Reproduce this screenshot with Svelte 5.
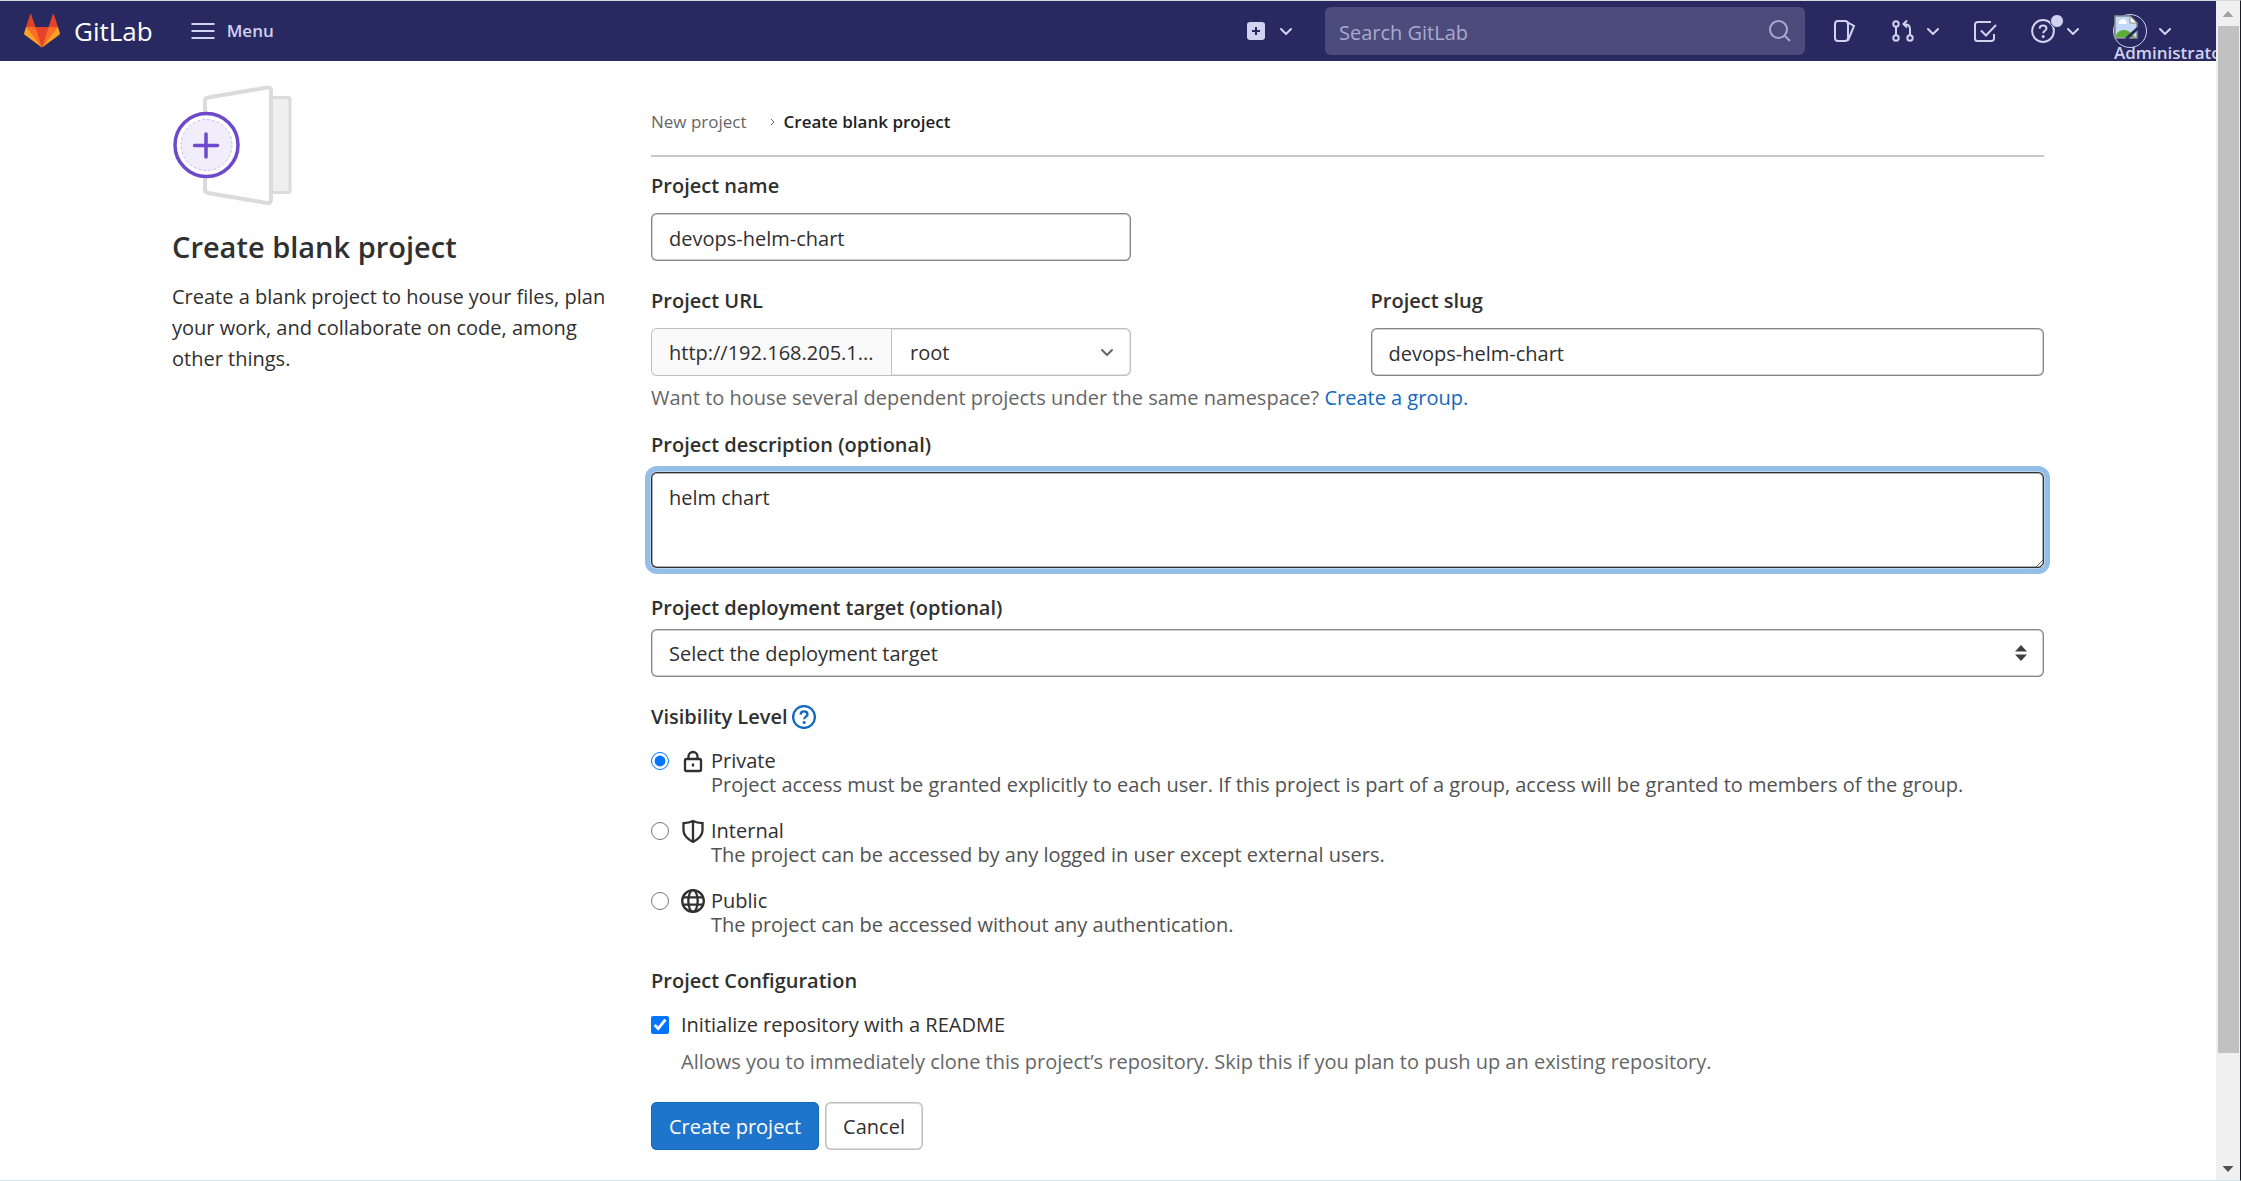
<script>
  let projectName = 'devops-helm-chart';
  let slug = 'devops-helm-chart';
  let namespace = 'root';
  let description = 'helm chart';
  let target = '';
  let visibility = 'private';
  let readme = true;

  const levels = [
    {
      id: 'private',
      title: 'Private',
      text: 'Project access must be granted explicitly to each user. If this project is part of a group, access will be granted to members of the group.'
    },
    {
      id: 'internal',
      title: 'Internal',
      text: 'The project can be accessed by any logged in user except external users.'
    },
    {
      id: 'public',
      title: 'Public',
      text: 'The project can be accessed without any authentication.'
    }
  ];
</script>

{#snippet chevron()}
  <svg class="chevron" viewBox="0 0 12 12" aria-hidden="true">
    <path d="M1 4l5 5 5-5" />
  </svg>
{/snippet}

{#snippet question()}
  <svg class="icon" viewBox="0 0 24 24" aria-hidden="true">
    <circle cx="12" cy="12" r="10.9" />
    <path d="M8.6 9.6c.1-2 1.5-3.2 3.4-3.2s3.5 1.2 3.5 3c0 2.3-3.3 2.3-3.3 4.8" />
    <circle class="solid" cx="12.2" cy="17.5" r="1.5" />
  </svg>
{/snippet}

<div class="window">
  <div class="page">
    <header class="navbar">
      <a class="brand" href="#home">
        <svg class="tanuki" viewBox="0 0 36 36" aria-hidden="true">
          <path fill="#e24329" d="M2 14l9.38 9v-9l-4-12.28c-.205-.632-1.176-.632-1.38 0z" />
          <path fill="#e24329" d="M34 14l-9.38 9v-9l4-12.28c.205-.632 1.176-.632 1.38 0z" />
          <path fill="#e24329" d="M18 34.38L3 14h30z" />
          <path fill="#fc6d26" d="M18 34.38L11.38 14H2l4 11z" />
          <path fill="#fc6d26" d="M18 34.38L24.62 14H34l-4 11z" />
          <path fill="#fca326" d="M2 14L.1 20.16c-.18.565 0 1.2.5 1.56l17.42 12.66z" />
          <path fill="#fca326" d="M34 14l1.9 6.16c.18.565 0 1.2-.5 1.56L18 34.38z" />
        </svg>
        <span>GitLab</span>
      </a>

      <button class="nav-button menu" type="button">
        <svg class="icon" viewBox="0 0 24 24" aria-hidden="true">
          <path d="M0.5 5h23M0.5 12h23M0.5 19h23" />
        </svg>
        Menu
      </button>

      <button class="nav-button create" type="button" aria-label="Create new">
        <svg class="icon" viewBox="0 0 24 24" aria-hidden="true">
          <rect class="solid" x="3" y="3" width="18" height="18" rx="3" />
          <path class="cut" d="M12 8v8M8 12h8" />
        </svg>
        {@render chevron()}
      </button>

      <form class="search">
        <input type="search" placeholder="Search GitLab" aria-label="Search GitLab" />
        <svg class="icon" viewBox="0 0 24 24" aria-hidden="true">
          <circle cx="10.5" cy="10.5" r="8.5" />
          <path d="M16.5 16.5L22 22" />
        </svg>
      </form>

      <nav class="shortcuts">
        <button class="nav-button" type="button" aria-label="Issues">
          <svg class="icon" viewBox="0 0 24 24" aria-hidden="true">
            <rect x="2" y="2" width="13" height="20" rx="3" />
            <path d="M14 3l7 4-6 14.5" />
          </svg>
        </button>
        <button class="nav-button" type="button" aria-label="Merge requests">
          <svg class="icon" viewBox="0 0 24 24" aria-hidden="true">
            <circle cx="5" cy="5" r="2.7" />
            <circle cx="5" cy="19" r="2.7" />
            <circle cx="19" cy="19" r="2.7" />
            <path d="M5 8v8M19 16v-6c0-3-1.5-5-6-5M16 1.5L12.5 5l3.5 3.5" />
          </svg>
          {@render chevron()}
        </button>
        <button class="nav-button" type="button" aria-label="To-Do List">
          <svg class="icon" viewBox="0 0 24 24" aria-hidden="true">
            <path d="M18 3H4.5A2.5 2.5 0 0 0 2 5.5v14A2.5 2.5 0 0 0 4.5 22h14a2.5 2.5 0 0 0 2.5-2.5V15" />
            <path d="M8 11.5l5 5L23 6" />
          </svg>
        </button>
        <button class="nav-button help" type="button" aria-label="Help">
          {@render question()}
          <span class="dot"></span>
          {@render chevron()}
        </button>
        <button class="nav-button" type="button" aria-label="Administrator">
          <span class="avatar">
            <svg viewBox="0 0 24 24" aria-hidden="true">
              <path fill="#c3d8f5" stroke="#8a8a8a" stroke-width="1.5" d="M1 1h15l7 7v15H1z" />
              <path fill="#fff" d="M5 9a2.5 2.5 0 0 1 2-4 3 3 0 0 1 5 1 1.8 1.8 0 0 1 0 3z" />
              <path fill="#5aac34" d="M2 20c3-6 11-7 16-1l3 3H2z" />
              <path stroke="#292961" stroke-width="3" d="M12 24L24 13" />
              <path fill="#fff" stroke="#8a8a8a" d="M16 1v7h7z" />
            </svg>
            <span class="avatar-alt">Administrator</span>
          </span>
          {@render chevron()}
        </button>
      </nav>
    </header>

    <div class="container">
      <aside>
        <svg class="door" viewBox="0 0 120 120" aria-hidden="true">
          <rect x="92" y="12.5" width="26" height="95" rx="2" fill="#efefef" stroke="#dbdbdb" stroke-width="3" />
          <path fill="#fff" stroke="#dbdbdb" stroke-width="4" d="M33 16q0-3 3-3.5l59-10q4-.5 4 3v109q0 4-4 3.5l-59-10q-3-.5-3-3.5z" />
          <circle cx="34.5" cy="60" r="31.5" fill="#fff" stroke="#6e49cb" stroke-width="3.5" />
          <circle cx="34.5" cy="60" r="25.5" fill="#f1edfb" stroke="#cbbcf0" stroke-dasharray="3 2" />
          <path stroke="#6e49cb" stroke-width="3.5" stroke-linecap="round" d="M34 49v23M22.5 60.5h23" />
        </svg>
        <h1>Create blank project</h1>
        <p>Create a blank project to house your files, plan your work, and collaborate on code, among other things.</p>
      </aside>

      <main>
        <nav class="breadcrumb" aria-label="Breadcrumbs">
          <a href="#new">New project</a>
          <svg viewBox="0 0 6 8" aria-hidden="true"><path d="M1 1l3 3-3 3" /></svg>
          <a class="current" href="#blank">Create blank project</a>
        </nav>

        <form class="project-form">
          <div class="group">
            <label for="name">Project name</label>
            <input id="name" class="field narrow" type="text" bind:value={projectName} />
          </div>

          <div class="group with-hint">
            <div class="row">
              <div>
                <label for="namespace">Project URL</label>
                <div class="url narrow">
                  <span class="prefix">http://192.168.205.1...</span>
                  <div class="select">
                    <select id="namespace" bind:value={namespace}>
                      <option value="root">root</option>
                    </select>
                    {@render chevron()}
                  </div>
                </div>
              </div>
              <div>
                <label for="slug">Project slug</label>
                <input id="slug" class="field" type="text" bind:value={slug} />
              </div>
            </div>
            <p class="hint">
              Want to house several dependent projects under the same namespace? <a href="#group">Create a group.</a>
            </p>
          </div>

          <div class="group">
            <label for="description">Project description (optional)</label>
            <textarea id="description" class="field" bind:value={description}></textarea>
          </div>

          <div class="group tight">
            <label for="target">Project deployment target (optional)</label>
            <div class="select">
              <select id="target" class="field" bind:value={target}>
                <option value="">Select the deployment target</option>
              </select>
              <svg class="updown" viewBox="0 0 12 16" aria-hidden="true">
                <path d="M0 6.5L6 0l6 6.5zM0 9.5L6 16l6-6.5z" />
              </svg>
            </div>
          </div>

          <fieldset>
            <legend>
              Visibility Level
              <a href="#visibility" aria-label="Help">{@render question()}</a>
            </legend>
            <div class="levels">
              {#each levels as level}
                <div class="option">
                  <input type="radio" id={level.id} name="visibility" value={level.id} bind:group={visibility} />
                  <svg class="icon" viewBox="0 0 24 24" aria-hidden="true">
                    {#if level.id === 'private'}
                      <rect x="4" y="10" width="16" height="12" rx="1.5" />
                      <path d="M7.5 10V7.5a4.5 4.5 0 0 1 9 0V10M12 14.5v3" />
                    {:else if level.id === 'internal'}
                      <path d="M12 2c3 1.5 6 2 9.5 2.2v7.3c0 5-4 8.5-9.5 11.5-5.500-3-9.5-6.5-9.5-11.5V4.2C6 4 9 3.5 12 2zM12 2v20" />
                    {:else}
                      <circle cx="12" cy="12" r="10.8" />
                      <ellipse cx="12" cy="12" rx="4.7" ry="10.8" />
                      <path d="M2 8.3h20M2 15.7h20" />
                    {/if}
                  </svg>
                  <label for={level.id}>
                    {level.title}
                    <span>{level.text}</span>
                  </label>
                </div>
              {/each}
            </div>
          </fieldset>

          <fieldset>
            <legend>Project Configuration</legend>
            <div class="option">
              <input type="checkbox" id="readme" bind:checked={readme} />
              <label for="readme">Initialize repository with a README</label>
            </div>
            <p class="readme-hint">
              Allows you to immediately clone this project’s repository. Skip this if you plan to push up an existing repository.
            </p>
          </fieldset>

          <div class="actions">
            <button class="btn confirm" type="button">Create project</button>
            <button class="btn" type="button">Cancel</button>
          </div>
        </form>
      </main>
    </div>
  </div>

  <div class="scrollbar" aria-hidden="true">
    <svg viewBox="0 0 24 25"><path fill="#a3a3a3" d="M6.5 16L12 10l5.5 6z" /></svg>
    <div class="track"><div class="thumb"></div></div>
    <svg viewBox="0 0 24 25"><path fill="#505050" d="M6.5 11L12 17l5.5-6z" /></svg>
  </div>
</div>

<style>
  :global(body) {
    background: #fff;
  }

  .window {
    display: flex;
    box-sizing: border-box;
    height: 100vh;
    border-top: 1px solid #d3dbde;
    border-right: 1px solid #1b1b28;
    border-bottom: 1px solid #cde8ec;
    color: #303030;
    font-family: 'Open Sans', 'Noto Sans', sans-serif;
    font-size: 20px;
    line-height: 24px;
  }

  .page {
    flex: 1;
    min-width: 0;
    overflow: hidden;
  }

  h1,
  p,
  fieldset,
  legend {
    margin: 0;
    padding: 0;
    border: 0;
  }

  a {
    color: #1068bf;
    text-decoration: none;
  }

  button,
  input,
  select,
  textarea {
    margin: 0;
    font: inherit;
    color: inherit;
  }

  .icon {
    display: block;
    flex: none;
    width: 24px;
    height: 24px;
    fill: none;
    stroke: currentColor;
    stroke-width: 2;
  }

  .option .icon,
  legend .icon {
    stroke-width: 2.3;
  }

  .icon .solid {
    fill: currentColor;
    stroke: none;
  }

  .icon .cut {
    stroke: #292961;
  }

  .chevron {
    display: block;
    flex: none;
    width: 12px;
    height: 12px;
    fill: none;
    stroke: currentColor;
    stroke-width: 2;
    stroke-linecap: round;
    stroke-linejoin: round;
  }

  /* Navbar */
  .navbar {
    display: flex;
    align-items: center;
    box-sizing: border-box;
    height: 60px;
    padding: 0 45px 0 24px;
    overflow: hidden;
    background: #292961;
    color: #d1d1f0;
  }

  .brand {
    display: flex;
    align-items: center;
    gap: 14px;
    color: #fff;
    font-size: 26px;
  }

  .tanuki {
    width: 36px;
    height: 36px;
  }

  .nav-button {
    display: flex;
    align-items: center;
    gap: 12px;
    padding: 0;
    border: 0;
    background: none;
    font-size: 17px;
    font-weight: 600;
  }

  .menu {
    margin-left: 38px;
  }

  .create {
    margin-left: auto;
  }

  .search {
    position: relative;
    width: 480px;
    margin-left: 33px;
    color: #a9a9d0;
  }

  .search input {
    display: block;
    box-sizing: border-box;
    width: 100%;
    height: 48px;
    padding: 2px 48px 0 14px;
    border: 0;
    border-radius: 6px;
    background: #4b4b7c;
  }

  .search input::placeholder {
    color: #a9a9d0;
    opacity: 1;
  }

  .search .icon {
    position: absolute;
    top: 12px;
    right: 13px;
  }

  .shortcuts {
    display: flex;
    align-items: center;
    gap: 34px;
    margin-left: 28px;
  }

  .help {
    position: relative;
  }

  .dot {
    position: absolute;
    top: -5px;
    left: 19px;
    width: 12px;
    height: 12px;
    border: 1px solid #292961;
    border-radius: 50%;
    background: #d1d1f0;
  }

  .avatar {
    position: relative;
    box-sizing: border-box;
    width: 34px;
    height: 34px;
    border: 1px solid #d1d1f0;
    border-radius: 50%;
  }

  .avatar svg {
    display: block;
    width: 24px;
    height: 24px;
  }

  .avatar-alt {
    position: absolute;
    top: 26px;
    left: 0;
  }

  /* Content */
  .container {
    display: flex;
    gap: 39px;
    box-sizing: border-box;
    max-width: 1920px;
    margin: 0 auto;
    padding: 24px 24px 0;
  }

  aside {
    flex: 0 0 440px;
  }

  main {
    flex: 1;
    min-width: 0;
  }

  .door {
    display: block;
    width: 120px;
    height: 120px;
    fill: none;
  }

  h1 {
    margin: 22px 0 14px;
    font-size: 29px;
    font-weight: 600;
    line-height: 40px;
  }

  aside p {
    line-height: 31px;
  }

  .breadcrumb {
    display: flex;
    align-items: center;
    box-sizing: border-box;
    height: 72px;
    padding-top: 3px;
    border-bottom: 2px solid #c8c8c8;
    font-size: 17px;
  }

  .breadcrumb a {
    color: #666;
  }

  .breadcrumb svg {
    width: 6px;
    height: 8px;
    margin: 0 8px 0 23px;
    fill: none;
    stroke: #666;
  }

  .breadcrumb .current {
    color: #1f1f1f;
    font-weight: 600;
  }

  .project-form {
    padding-top: 17px;
  }

  .group {
    margin-bottom: 28px;
  }

  .with-hint {
    margin-bottom: 23px;
  }

  .group label,
  legend {
    display: block;
    font-weight: 600;
  }

  .group label {
    margin-bottom: 15px;
  }

  .tight label {
    margin-bottom: 9px;
  }

  .row {
    display: grid;
    grid-template-columns: 1fr 1fr;
    gap: 46px;
  }

  .narrow {
    max-width: 480px;
  }

  .field {
    display: block;
    box-sizing: border-box;
    width: 100%;
    height: 48px;
    padding: 2px 18px 0;
    border: 0;
    border-radius: 6px;
    background: #fff;
    box-shadow: inset 0 0 0 1px #868686, inset 0 0 0 2px #d0d0d0;
  }

  textarea.field {
    height: 96px;
    padding: 14px 18px;
    outline: 0;
    resize: vertical;
    box-shadow: inset 0 0 0 1px #303030, inset 0 0 0 2px #b0b0b0, 0 0 0 1px #b8d5f0, 0 0 0 6px #94bee7;
  }

  .url {
    display: flex;
    box-sizing: border-box;
    height: 48px;
    border-radius: 6px;
    background: #fff;
    box-shadow: inset 0 0 0 1px #bfbfbf, inset 0 0 0 2px #e4e4e4;
  }

  .prefix {
    flex: 0 0 50%;
    box-sizing: border-box;
    height: 46px;
    margin: 1px 0 1px 1px;
    padding-left: 17px;
    border-right: 1px solid #bfbfbf;
    border-radius: 5px 0 0 5px;
    background: #fafafa;
    line-height: 48px;
    white-space: nowrap;
  }

  .select {
    position: relative;
    flex: 1;
    min-width: 0;
  }

  .select select {
    display: block;
    width: 100%;
    height: 48px;
    padding: 2px 18px 0;
    border: 0;
    appearance: none;
  }

  .url select {
    background: none;
  }

  .select .chevron {
    position: absolute;
    top: 18px;
    right: 18px;
    color: #666;
  }

  .updown {
    position: absolute;
    top: 16px;
    right: 17px;
    width: 12px;
    height: 16px;
    fill: #404040;
  }

  .hint {
    margin-top: 10px;
    color: #666;
  }

  fieldset {
    margin-bottom: 28px;
  }

  legend {
    display: flex;
    align-items: center;
    gap: 4px;
    margin-bottom: 20px;
  }

  .levels {
    display: grid;
    gap: 22px;
    padding-bottom: 4px;
  }

  .option {
    display: flex;
  }

  .option input {
    flex: none;
    width: 18px;
    height: 18px;
    margin: 3px 12px 0 0;
  }

  .option .icon {
    margin-right: 6px;
  }

  .option label span {
    display: block;
    color: #525252;
  }

  .readme-hint {
    margin: 13px 0 0 30px;
    color: #666;
  }

  .actions {
    display: flex;
    gap: 6px;
  }

  .btn {
    height: 48px;
    padding: 2px 18px 0;
    border: 0;
    border-radius: 6px;
    background: #fff;
    box-shadow: inset 0 0 0 1px #bfbfbf, inset 0 0 0 2px #dcdcdc;
  }

  .confirm {
    background: #1f75cb;
    box-shadow: inset 0 0 0 1px #1068bf;
    color: #fff;
  }

  /* Scrollbar */
  .scrollbar {
    display: flex;
    flex-direction: column;
    width: 24px;
    background: #f0f0f0;
  }

  .scrollbar svg {
    width: 24px;
    height: 25px;
  }

  .track {
    flex: 1;
    padding: 0 1px 0 2px;
  }

  .thumb {
    height: 91%;
    background: #c1c1c1;
  }
</style>
